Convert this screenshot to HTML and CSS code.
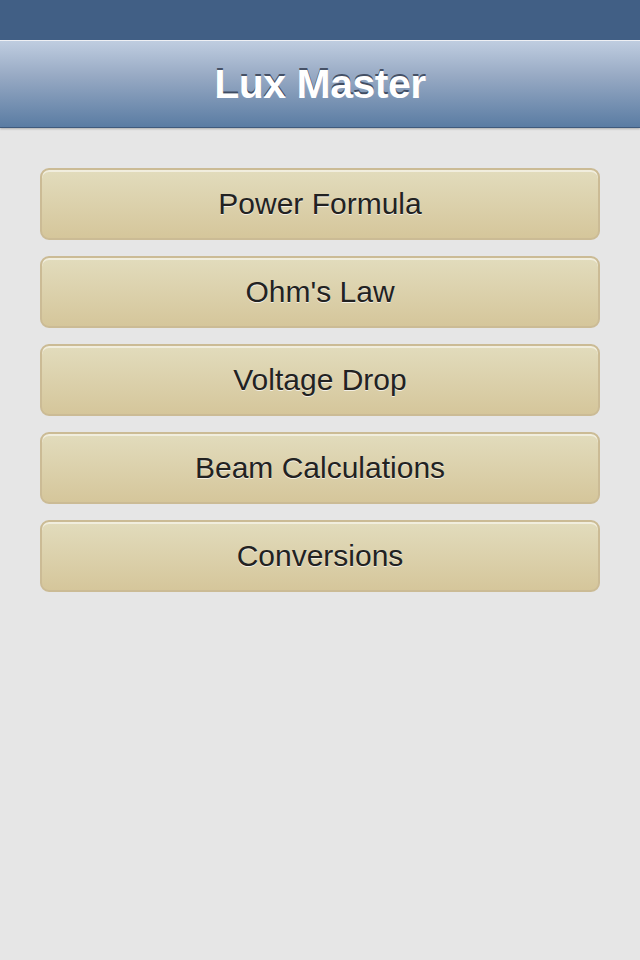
FILE: index.html
```html
<!DOCTYPE html>
<html>
<head>
<meta charset="utf-8">
<link rel="stylesheet" href="styles.css">
</head>
<body>
<div class="status"></div>
<header class="nav"><h1 class="title">Lux Master</h1></header>
<main class="list">
  <button class="btn">Power Formula</button>
  <button class="btn">Ohm's Law</button>
  <button class="btn">Voltage Drop</button>
  <button class="btn">Beam Calculations</button>
  <button class="btn">Conversions</button>
</main>
</body>
</html>
```
FILE: styles.css
```css
html, body { margin: 0; padding: 0; }
body {
  width: 640px; height: 960px; overflow: hidden;
  background: #e6e6e6;
  font-family: "Liberation Sans", Arial, sans-serif;
}
.status {
  height: 40px;
  background: #415f85;
  border-bottom: 1px solid #f2f4f8;
}
.nav {
  height: 86px;
  background: linear-gradient(#bfcde0, #98aac4 40%, #5a7ca3);
  border-bottom: 1px solid #3f5a7c;
  box-shadow: 0 1px 2px rgba(0,0,0,0.25);
  display: flex; align-items: center; justify-content: center;
}
.title {
  margin: 0;
  color: #fff;
  font-size: 41px;
  font-weight: bold;
  text-shadow: 0 -2px 0 rgba(40,50,70,0.75);
  letter-spacing: -0.5px;
}
.list {
  padding: 40px 40px 0 40px;
  display: flex; flex-direction: column; gap: 16px;
}
.btn {
  height: 72px;
  border: 2px solid #cbbb95;
  border-radius: 9px;
  background: linear-gradient(#e2dcbd, #d5c69b);
  box-shadow: inset 0 2px 0 rgba(255,255,255,0.5);
  font-family: "Liberation Sans", Arial, sans-serif;
  font-size: 30px;
  color: #222;
  text-shadow: 0 1px 0 rgba(255,255,255,0.7);
  padding: 0;
}
```
